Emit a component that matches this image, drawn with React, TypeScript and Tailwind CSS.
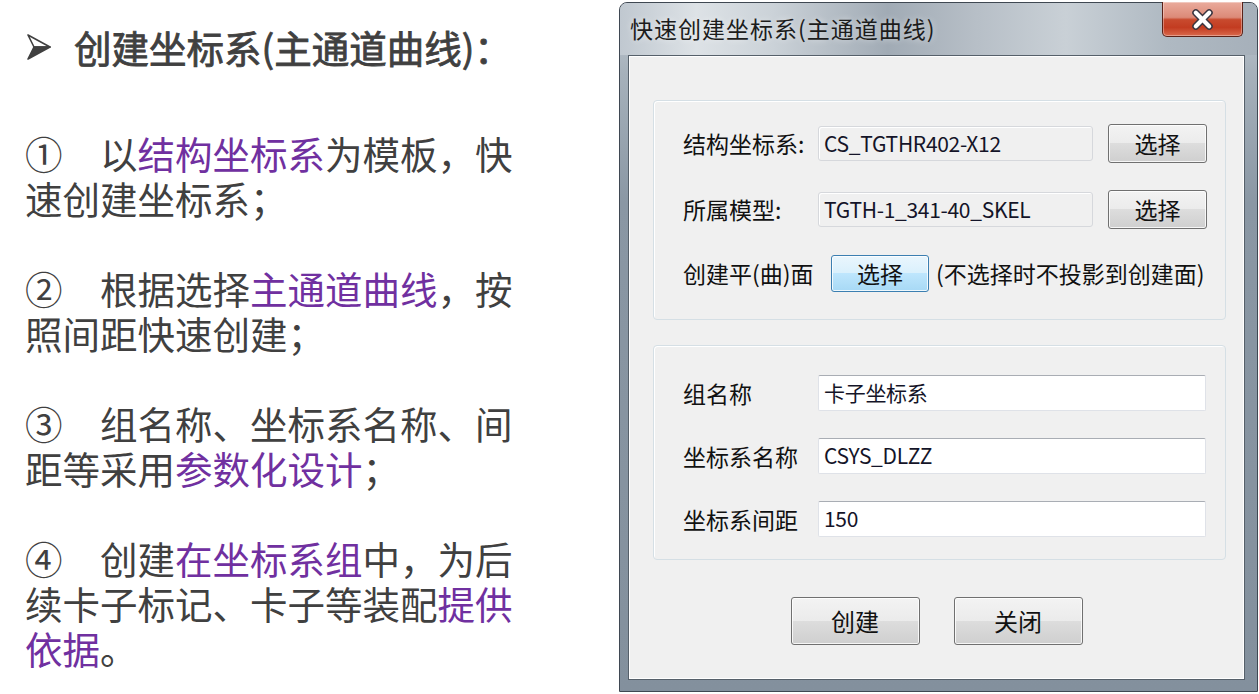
const purple = "text-[#7030a0]";

function Arrow() {
  return (
    <svg viewBox="0 0 24 26" className="ml-[2px] mr-[23px] h-[26px] w-[24px]">
      <polygon points="1,1 23,13 7,13" fill="#ffffff" stroke="#404040" strokeWidth="1.6" strokeLinejoin="round" />
      <polygon points="7,13 23,13 1,25" fill="#404040" stroke="#404040" strokeWidth="1.6" strokeLinejoin="round" />
    </svg>
  );
}

function WinButton({ label, w, h, focus }: { label: string; w: string; h: string; focus?: boolean }) {
  return (
    <div
      className={`${w} ${h} flex shrink-0 items-center justify-center rounded-[3px] border text-[#111] shadow-[inset_0_0_0_1px_rgba(255,255,255,0.8)] ${
        focus
          ? "border-[#3c7fb1] bg-[linear-gradient(180deg,#eaf6fd_0%,#d9f0fc_50%,#bee6fd_50%,#a7d9f5_100%)]"
          : "border-[#707070] bg-[linear-gradient(180deg,#f3f3f3_0%,#ebebeb_50%,#dddddd_50%,#cfcfcf_100%)]"
      }`}
    >
      {label}
    </div>
  );
}

function ReadOnly({ value }: { value: string }) {
  return (
    <div className="flex h-[35px] w-[275px] shrink-0 items-center rounded-[3px] border border-[#d6d8dc] bg-[#f0f0f0] pl-[5px] text-[21px] tracking-[-0.3px] text-[#141428] shadow-[inset_1px_1px_0_#ffffff]">
      {value}
    </div>
  );
}

function Field({ value }: { value: string }) {
  return (
    <div className="flex h-[36px] w-[388px] shrink-0 items-center rounded-[2px] border border-[#dfe2e8] border-t-[#a9adb4] bg-white pl-[5px] text-[21px] tracking-[-0.3px] text-[#141428]">
      {value}
    </div>
  );
}

function Dialog() {
  return (
    <div className="mt-[2px] flex h-[690px] w-[639px] shrink-0 flex-col rounded-t-[8px] border border-[#3f4852] bg-[linear-gradient(180deg,#c2cad2_0px,#a6b1bb_70px,#8a97a4_200px,#83909d_100%)]">
      <div className="relative flex h-[52px] shrink-0 items-center rounded-t-[7px] bg-[linear-gradient(90deg,#c0c8d0_0%,#dde2e6_12%,#cbd2d8_24%,#a1abb5_42%,#b7bfc7_56%,#c9d0d6_70%,#afb9c2_86%,#a6b0ba_100%)] pb-[1px] pl-[10px]">
        <span className="text-[23px] tracking-[1px] text-[#1c1c1c] [text-shadow:0_0_6px_rgba(255,255,255,0.6)]">
          快速创建坐标系(主通道曲线)
        </span>
        <div className="absolute right-[14px] top-[-1px] flex h-[35px] w-[81px] items-center justify-center rounded-b-[5px] border border-t-0 border-[#5b2218] bg-[linear-gradient(180deg,#eaab9c_0%,#dc8a78_45%,#c84a2e_52%,#c33c21_75%,#d9694c_100%)] shadow-[inset_0_0_0_1px_rgba(255,255,255,0.35)]">
          <svg viewBox="0 0 24 22" className="h-[21px] w-[23px]">
            <path d="M5 4 L19 18 M19 4 L5 18" stroke="#3a3540" strokeWidth="7.5" strokeLinecap="round" fill="none" />
            <path d="M5 4 L19 18 M19 4 L5 18" stroke="#ffffff" strokeWidth="4.4" strokeLinecap="round" fill="none" />
          </svg>
        </div>
      </div>

      <div className="ml-[8px] flex h-[625px] w-[617px] shrink-0 flex-col border border-[#56606a] bg-[#f0f0f0] pt-[44px] text-[23px] text-[#111] shadow-[inset_1px_1px_0_#ffffff,inset_-1px_-1px_0_#ffffff]">
        <div className="ml-[24px] h-[220px] w-[573px] shrink-0 rounded-[4px] border border-[#d5dfe5] pl-[29px] pt-[23px] shadow-[inset_1px_1px_0_#ffffff]">
          <div className="flex h-[39px] items-center">
            <span className="w-[135px] shrink-0">结构坐标系:</span>
            <ReadOnly value="CS_TGTHR402-X12" />
            <div className="ml-[15px]">
              <WinButton label="选择" w="w-[99px]" h="h-[39px]" />
            </div>
          </div>
          <div className="mt-[27px] flex h-[39px] items-center">
            <span className="w-[135px] shrink-0">所属模型:</span>
            <ReadOnly value="TGTH-1_341-40_SKEL" />
            <div className="ml-[15px]">
              <WinButton label="选择" w="w-[99px]" h="h-[39px]" />
            </div>
          </div>
          <div className="mt-[25px] flex h-[39px] items-center">
            <span className="w-[148px] shrink-0">创建平(曲)面</span>
            <WinButton label="选择" w="w-[98px]" h="h-[37px]" focus />
            <span className="ml-[7px] whitespace-nowrap">(不选择时不投影到创建面)</span>
          </div>
        </div>

        <div className="ml-[24px] mt-[25px] h-[215px] w-[573px] shrink-0 rounded-[4px] border border-[#d5dfe5] pl-[29px] pt-[29px] shadow-[inset_1px_1px_0_#ffffff]">
          <div className="flex h-[36px] items-center">
            <span className="w-[135px] shrink-0">组名称</span>
            <Field value="卡子坐标系" />
          </div>
          <div className="mt-[27px] flex h-[36px] items-center">
            <span className="w-[135px] shrink-0">坐标系名称</span>
            <Field value="CSYS_DLZZ" />
          </div>
          <div className="mt-[27px] flex h-[36px] items-center">
            <span className="w-[135px] shrink-0">坐标系间距</span>
            <Field value="150" />
          </div>
        </div>

        <div className="mt-[37px] flex justify-center gap-[34px] text-[24px]">
          <WinButton label="创建" w="w-[129px]" h="h-[48px]" />
          <WinButton label="关闭" w="w-[129px]" h="h-[48px]" />
        </div>
      </div>
    </div>
  );
}

export default function App() {
  return (
    <div className="flex h-[694px] w-[1259px] overflow-hidden bg-white font-['Noto_Sans_CJK_SC',sans-serif]">
      <div className="w-[619px] shrink-0 pl-[25px] pt-[24px] text-[37.5px] leading-[45px] text-[#404040]">
        <div className="flex items-center">
          <Arrow />
          <span className="[-webkit-text-stroke:0.8px_#404040]">创建坐标系(主通道曲线)：</span>
        </div>
        <div className="mt-[61px] flex flex-col gap-[45px]">
          <p>
            ①　以<span className={purple}>结构坐标系</span>为模板，快
            <br />
            速创建坐标系；
          </p>
          <p>
            ②　根据选择<span className={purple}>主通道曲线</span>，按
            <br />
            照间距快速创建；
          </p>
          <p>
            ③　组名称、坐标系名称、间
            <br />
            距等采用<span className={purple}>参数化设计</span>；
          </p>
          <p>
            ④　创建<span className={purple}>在坐标系组</span>中，为后
            <br />
            续卡子标记、卡子等装配<span className={purple}>提供</span>
            <br />
            <span className={purple}>依据</span>。
          </p>
        </div>
      </div>
      <Dialog />
    </div>
  );
}
